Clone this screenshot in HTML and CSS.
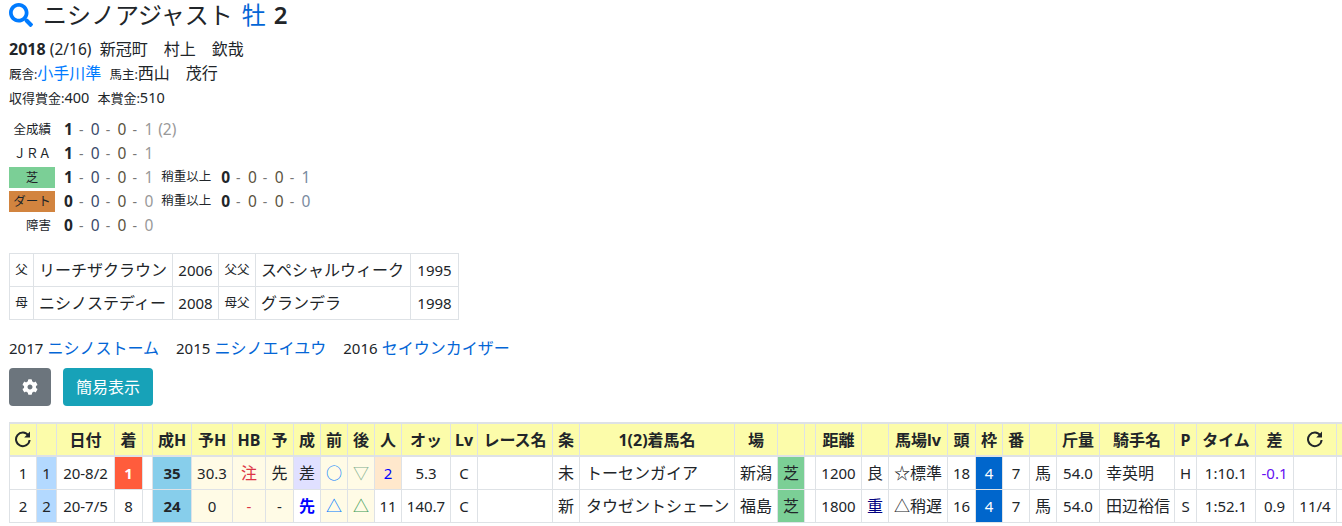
FILE: index.html
```html
<!DOCTYPE html>
<html lang="ja">
<head>
<meta charset="utf-8">
<title>ニシノアジャスト</title>
<link rel="stylesheet" href="styles.css">
</head>
<body>
<h1 class="title">
  <svg class="search" viewBox="0 0 512 512"><path d="M505 442.7L405.3 343c-4.5-4.5-10.6-7-17-7H372c27.6-35.3 44-79.7 44-128C416 93.1 322.9 0 208 0S0 93.1 0 208s93.1 208 208 208c48.3 0 92.7-16.4 128-44v16.3c0 6.4 2.5 12.5 7 17l99.7 99.7c9.4 9.4 24.6 9.4 33.9 0l28.3-28.3c9.4-9.4 9.4-24.6.1-34zM208 336c-70.7 0-128-57.2-128-128 0-70.7 57.2-128 128-128 70.7 0 128 57.2 128 128 0 70.7-57.2 128-128 128z"/></svg>
  <span class="name">ニシノアジャスト</span><span class="sex">牡</span><span class="age">2</span>
</h1>
<p class="line"><b class="yr">2018</b> <span class="dd">(2/16)</span>&nbsp; 新冠町　村上　欽哉</p>
<p class="line"><small>厩舎:</small><a class="lnk" href="#">小手川準</a><small class="gap">馬主:</small>西山　茂行</p>
<p class="line"><small class="sm">収得賞金:<span class="sd">400</span></small><small class="sm gap2">本賞金:<span class="sd">510</span></small></p>

<div class="records">
  <div class="rec"><span class="lab">全成績</span><span class="set"><b>1</b><i>-</i></span><span class="set c2">0<i>-</i></span><span class="set c3">0<i>-</i></span><span class="set c4">1</span><span class="extra">(2)</span></div>
  <div class="rec"><span class="lab">ＪＲＡ</span><span class="set"><b>1</b><i>-</i></span><span class="set c2">0<i>-</i></span><span class="set c3">0<i>-</i></span><span class="set c4">1</span></div>
  <div class="rec"><span class="lab turf">芝</span><span class="set"><b>1</b><i>-</i></span><span class="set c2">0<i>-</i></span><span class="set c3">0<i>-</i></span><span class="set c4">1</span><span class="heavy">稍重以上</span><span class="set"><b>0</b><i>-</i></span><span class="set c3">0<i>-</i></span><span class="set c3">0<i>-</i></span><span class="set c5">1</span></div>
  <div class="rec"><span class="lab dirt">ダート</span><span class="set"><b>0</b><i>-</i></span><span class="set c2">0<i>-</i></span><span class="set c3">0<i>-</i></span><span class="set c4">0</span><span class="heavy">稍重以上</span><span class="set"><b>0</b><i>-</i></span><span class="set c3">0<i>-</i></span><span class="set c3">0<i>-</i></span><span class="set c5">0</span></div>
  <div class="rec"><span class="lab">障害</span><span class="set"><b>0</b><i>-</i></span><span class="set c2">0<i>-</i></span><span class="set c3">0<i>-</i></span><span class="set c4">0</span></div>
</div>

<table class="ped">
  <colgroup><col class="w24"><col class="w139"><col class="w46"><col class="w37"><col class="w155"><col class="w48"></colgroup>
  <tr><td class="rel">父</td><td>リーチザクラウン</td><td class="n">2006</td><td class="rel">父父</td><td>スペシャルウィーク</td><td class="n">1995</td></tr>
  <tr><td class="rel">母</td><td>ニシノステディー</td><td class="n">2008</td><td class="rel">母父</td><td>グランデラ</td><td class="n">1998</td></tr>
</table>

<p class="sib"><span class="d">2017</span> <a href="#">ニシノストーム</a><span class="d sg">2015</span> <a href="#">ニシノエイユウ</a><span class="d sg">2016</span> <a href="#">セイウンカイザー</a></p>

<div class="btns">
  <button class="btn gear" type="button"><svg viewBox="0 0 512 512"><path d="M487.4 315.7l-42.6-24.6c4.3-23.2 4.3-47 0-70.2l42.6-24.6c4.9-2.8 7.1-8.6 5.5-14-11.1-35.6-30-67.8-54.7-94.6-3.8-4.1-10-5.1-14.8-2.3L380.8 110c-17.9-15.4-38.5-27.3-60.8-35.1V25.8c0-5.6-3.9-10.5-9.4-11.7-36.7-8.2-74.3-7.8-109.2 0-5.5 1.2-9.4 6.1-9.4 11.7V75c-22.2 7.9-42.8 19.8-60.8 35.1L88.7 85.5c-4.9-2.8-11-1.9-14.8 2.3-24.7 26.7-43.6 58.9-54.7 94.6-1.7 5.4.6 11.2 5.5 14L67.3 221c-4.3 23.2-4.3 47 0 70.2l-42.6 24.6c-4.9 2.8-7.1 8.6-5.5 14 11.1 35.6 30 67.8 54.7 94.6 3.8 4.1 10 5.1 14.8 2.3l42.6-24.6c17.9 15.4 38.5 27.3 60.8 35.1v49.2c0 5.6 3.9 10.5 9.4 11.7 36.7 8.2 74.3 7.8 109.2 0 5.5-1.2 9.4-6.1 9.4-11.7v-49.2c22.2-7.9 42.8-19.8 60.8-35.1l42.6 24.6c4.9 2.8 11 1.9 14.8-2.3 24.7-26.7 43.6-58.9 54.7-94.6 1.5-5.5-.7-11.3-5.6-14.1zM256 336c-44.1 0-80-35.9-80-80s35.9-80 80-80 80 35.9 80 80-35.9 80-80 80z"/></svg></button>
  <button class="btn info" type="button">簡易表示</button>
</div>

<table class="races">
  <colgroup>
    <col class="w27"><col class="w20"><col class="w58"><col class="w28"><col class="w10"><col class="w39"><col class="w41"><col class="w33"><col class="w28"><col class="w27"><col class="w27"><col class="w27"><col class="w27"><col class="w49"><col class="w27"><col class="w75"><col class="w27"><col class="w155"><col class="w43"><col class="w27"><col class="w11"><col class="w46"><col class="w27"><col class="w59"><col class="w28"><col class="w27"><col class="w27"><col class="w27"><col class="w43"><col class="w75"><col class="w22"><col class="w59"><col class="w38"><col class="w43"><col class="w27">
  </colgroup>
  <thead>
    <tr>
      <th><svg class="redo" viewBox="0 0 18 18"><path d="M14.4 5.4A6.8 6.8 0 1 0 15.6 10"/><path class="tip" d="M16 1.6v5.8h-5.8z"/></svg></th><th></th><th>日付</th><th>着</th><th></th><th>成H</th><th>予H</th><th>HB</th><th>予</th><th>成</th><th>前</th><th>後</th><th>人</th><th>オッ</th><th>Lv</th><th>レース名</th><th>条</th><th>1(2)着馬名</th><th>場</th><th></th><th></th><th>距離</th><th></th><th>馬場lv</th><th>頭</th><th>枠</th><th>番</th><th></th><th>斤量</th><th>騎手名</th><th>P</th><th>タイム</th><th>差</th><th><svg class="redo" viewBox="0 0 18 18"><path d="M14.4 5.4A6.8 6.8 0 1 0 15.6 10"/><path class="tip" d="M16 1.6v5.8h-5.8z"/></svg></th><th></th>
    </tr>
  </thead>
  <tbody>
    <tr>
      <td class="n">1</td><td class="n no">1</td><td class="n">20-8/2</td><td class="n first">1</td><td></td><td class="n hi">35</td><td class="n pale">30.3</td><td class="pale red">注</td><td class="pale">先</td><td class="lav">差</td><td class="pale bl">○</td><td class="pale gr1">▽</td><td class="n peach blue">2</td><td class="n">5.3</td><td class="n">C</td><td></td><td>未</td><td class="lf">トーセンガイア</td><td>新潟</td><td class="tf">芝</td><td></td><td class="n">1200</td><td>良</td><td>☆標準</td><td class="n">18</td><td class="n gate">4</td><td class="n">7</td><td>馬</td><td class="n">54.0</td><td class="lf">幸英明</td><td class="n">H</td><td class="n">1:10.1</td><td class="n vio">-0.1</td><td></td><td></td>
    </tr>
    <tr>
      <td class="n">2</td><td class="n no">2</td><td class="n">20-7/5</td><td class="n">8</td><td></td><td class="n hi">24</td><td class="n pale">0</td><td class="n pale red">-</td><td class="n pale">-</td><td class="lead">先</td><td class="pale bl">△</td><td class="pale gr2">△</td><td class="n">11</td><td class="n">140.7</td><td class="n">C</td><td></td><td>新</td><td class="lf">タウゼントシェーン</td><td>福島</td><td class="tf">芝</td><td></td><td class="n">1800</td><td class="navy">重</td><td>△稍遅</td><td class="n">16</td><td class="n gate">4</td><td class="n">7</td><td>馬</td><td class="n">54.0</td><td class="lf">田辺裕信</td><td class="n">S</td><td class="n">1:52.1</td><td class="n">0.9</td><td class="n">11/4</td><td></td>
    </tr>
  </tbody>
</table>
</body>
</html>
```

FILE: styles.css
```css
html, body { margin: 0; padding: 0; }
body {
  padding-left: 9px;
  width: 1400px;
  height: 526px;
  overflow: hidden;
  background: #fff;
  color: #212529;
  font-family: "Noto Sans", "Noto Sans CJK JP", sans-serif;
  font-size: 16px;
  line-height: 24px;
}
a { color: #0366d6; text-decoration: none; }

.title {
  display: flex;
  align-items: center;
  margin: 0 0 7px;
  height: 30px;
  font-size: 24px;
  font-weight: 400;
  line-height: 30px;
}
.search { width: 24px; height: 24px; fill: #007bff; margin-right: 10px; }
.sex { color: #0366d6; margin-left: 9px; }
.age { margin-left: 8px; font-weight: 600; }

.line { margin: 0; height: 24px; white-space: nowrap; }
.line small { font-size: 12.5px; }
.line small.sm { font-size: 13px; }
.sd { font-size: 14.5px; }
.yr { font-size: 16px; }
.d { font-size: 15px; }
.dd { font-size: 15.5px; }
.lnk { color: #007bff; }
.gap { margin-left: 8px; }
.gap2 { margin-left: 8px; }

.records { margin-top: 8px; }
.rec { display: flex; align-items: center; height: 24px; font-size: 15.5px; }
.lab {
  width: 42px;
  height: 21px;
  padding-right: 4px;
  margin-right: 9px;
  text-align: right;
  font-size: 12.5px;
  line-height: 21px;
  white-space: nowrap;
}
.lab.turf { background: #7bcf96; text-align: center; padding: 0 2px; }
.lab.dirt { background: #d2843f; text-align: center; padding: 0 2px; }
.set { width: 26.8px; flex: none; color: #556; }
.set i { font-style: normal; margin-left: 6px; color: #777; font-size: 14px; }
.set b { color: #212529; }
.c2 { color: #3a4a6a; }
.c3 { color: #5a5340; }
.c4 { color: #999; }
.c5 { color: #7a8ba0; }
.extra { color: #999; margin-left: -13px; }
.heavy { font-size: 12.5px; margin: 0 8px 0 -10px; width: 52px; white-space: nowrap; }

.ped { border-collapse: collapse; table-layout: fixed; width: 449px; margin-top: 16px; }
.ped td { border: 1px solid #dee2e6; height: 32px; padding: 0 0 0 5px; text-align: left; white-space: nowrap; }
.ped .n { font-size: 15px; text-align: center; padding: 0; }
.ped .rel { font-size: 12.5px; text-align: center; padding: 0; }

.sib { margin: 16px 0 8px; height: 24px; white-space: nowrap; }
.sg { margin-left: 17px; }

.btns { display: flex; gap: 12px; height: 38px; }
.btn { border: 0; border-radius: 4px; color: #fff; padding: 0; font: inherit; display: flex; align-items: center; justify-content: center; }
.gear { width: 42px; background: #6c757d; }
.gear svg { width: 16px; height: 16px; fill: #fff; }
.info { width: 90px; background: #17a2b8; }

.races { border-collapse: collapse; table-layout: fixed; width: 1355px; margin-top: 16px; }
.races th, .races td {
  border: 1px solid #dee2e6;
  padding: 0;
  text-align: center;
  white-space: nowrap;
  overflow: hidden;
}
.races th {
  height: 31px;
  background: #fcfcaa;
  border-top-width: 2px;
  border-bottom-width: 2px;
  font-weight: 700;
}
.races td { height: 32px; }
.races .n { font-size: 15px; }
.redo { width: 18px; height: 18px; display: block; margin: -2px auto 0; fill: none; stroke: #212529; stroke-width: 2; }
.redo .tip { fill: #212529; stroke: none; }

.w10 { width: 10px; } .w11 { width: 11px; } .w20 { width: 20px; } .w22 { width: 22px; }
.w24 { width: 24px; } .w27 { width: 27px; } .w28 { width: 28px; } .w33 { width: 33px; }
.w37 { width: 37px; } .w38 { width: 38px; } .w39 { width: 39px; } .w41 { width: 41px; }
.w43 { width: 43px; } .w46 { width: 46px; } .w48 { width: 48px; } .w49 { width: 49px; }
.w58 { width: 58px; } .w59 { width: 59px; } .w75 { width: 75px; } .w139 { width: 139px; }
.w155 { width: 155px; }

.races .no { background: #b3d9ff; }
.races .first { background: #ff5c3c; color: #fff; font-weight: 700; }
.races .hi { background: #87ceeb; font-weight: 700; }
.races .pale { background: #fffbe6; }
.races .lav { background: #e0e0ff; }
.races .peach { background: #ffe8cc; }
.races .tf { background: #7bcf96; }
.races .gate { background: #0066cc; color: #fff; }
.red { color: #dc3545; }
.bl { color: #007bff; }
.gr1 { color: #7fb08f; }
.gr2 { color: #3a9a55; }
.blue { color: #0000ff; }
.vio { color: #6610f2; }
.navy { color: #000080; }
.lead { color: #0000ff; font-weight: 700; }
.races .lf { text-align: left; padding-left: 6px; }
```
